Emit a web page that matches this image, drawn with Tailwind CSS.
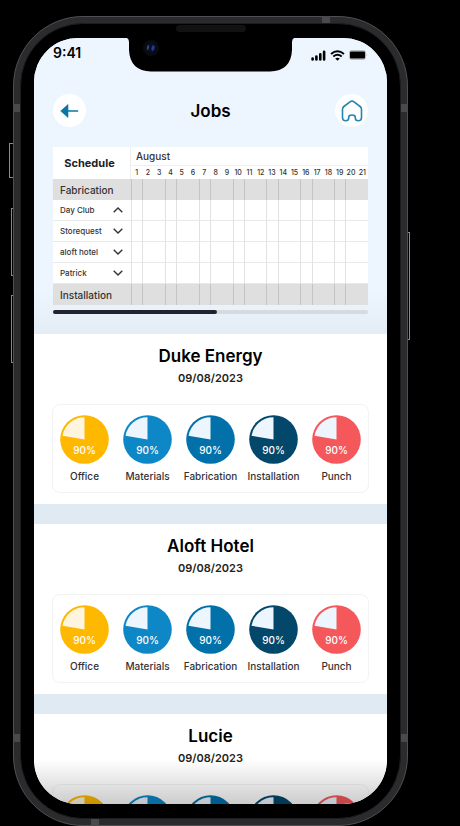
<!DOCTYPE html>
<html lang="en">
<head>
<meta charset="utf-8">
<meta name="viewport" content="width=device-width, initial-scale=1">
<title>Jobs</title>
<script src="https://cdn.jsdelivr.net/npm/@tailwindcss/browser@4"></script>
</head>
<body class="bg-black font-['Inter','Liberation_Sans',sans-serif] text-black">
<div class="h-screen overflow-hidden pt-4 pl-[13px] pr-[52px]">
  <div class="relative h-full rounded-[70px] border border-[#505052] bg-[#2b2b2d] p-[6px]">
    <!-- hardware buttons -->
    <span class="absolute -left-[5px] top-[126px] h-[35px] w-1 border border-r-0 border-[#8a8a8a]"></span>
    <span class="absolute -left-[3px] top-[191px] h-[68px] w-[2px] border border-r-0 border-[#8a8a8a]"></span>
    <span class="absolute -left-[3px] top-[278px] h-[68px] w-[2px] border border-r-0 border-[#8a8a8a]"></span>
    <span class="absolute -right-[3px] top-[215px] h-[108px] w-[2px] border border-l-0 border-[#8a8a8a]"></span>
    <!-- antenna bands -->
    <span class="absolute -left-px top-[87px] h-2 w-[7px] bg-[#4a4a4c]"></span>
    <span class="absolute -right-px top-[87px] h-2 w-[7px] bg-[#4a4a4c]"></span>
    <span class="absolute -left-px bottom-[83px] h-2 w-[7px] bg-[#4a4a4c]"></span>
    <span class="absolute -right-px bottom-[83px] h-2 w-[7px] bg-[#4a4a4c]"></span>
    <span class="absolute -top-px right-[77px] h-[7px] w-2 bg-[#4a4a4c]"></span>
    <span class="absolute -bottom-px left-[77px] h-[7px] w-2 bg-[#4a4a4c]"></span>

    <div class="relative h-full rounded-[63px] border border-[#1c1c1d] bg-black px-[13px] pt-[14px] pb-[14px]">
      <span class="absolute left-1/2 top-px h-[7px] w-[70px] -translate-x-1/2 rounded-full bg-[#121213]"></span>

      <main class="relative h-full overflow-hidden rounded-[44px] bg-[#e0eaf3]">
        <!-- notch -->
        <div class="absolute inset-x-0 top-0 z-10 flex justify-center">
          <svg class="block" width="167" height="34" viewBox="0 0 167 34" aria-hidden="true">
            <path d="M0 0H167Q165 1 165 4V12Q164 33 143 33.500H24Q3 33 2 12V4Q2 1 0 0Z" fill="#000"/>
            <circle cx="24" cy="10" r="8" fill="#0a0b10"/>
            <circle cx="24" cy="10" r="5" fill="#0b0d22"/>
            <ellipse cx="21" cy="9.500" rx="1" ry="2.500" fill="#24565a" transform="rotate(15 21 9.500)"/>
            <ellipse cx="26" cy="10" rx="1.500" ry="2.800" fill="#2338a0" transform="rotate(15 26 10)"/>
          </svg>
        </div>

        <div class="h-full overflow-y-auto [scrollbar-width:none]">
          <header class="bg-linear-to-b from-[#edf5fe] from-85% to-[#e4edf6] px-[19px] pb-5">
            <div class="flex h-[30px] items-center justify-between">
              <span class="text-sm font-semibold">9:41</span>
              <div class="flex items-center gap-1 pt-1">
                <svg width="15" height="11" viewBox="0 0 15 11" aria-label="Signal"><path d="M1.600 9.500V8.500M5.400 9.500V6.500M9.300 9.500V4.300M13.100 9.500V1.700" stroke="#000" stroke-width="2.600" stroke-linecap="round" fill="none"/></svg>
                <svg width="15" height="11" viewBox="0 0 15 11" aria-label="Wi-Fi"><path d="M1 4Q7.500-1.400 14 4M3.300 6.500Q7.500 3 11.700 6.500" stroke="#000" stroke-width="1.900" fill="none"/><path d="M5.200 8.500Q7.500 6.800 9.800 8.500L7.500 10.800Z"/></svg>
                <svg width="19" height="10" viewBox="0 0 19 10" aria-label="Battery"><rect x=".5" y=".5" width="16" height="9" rx="2" fill="#d5dadf" stroke="#b9bec4"/><rect x="1" y="1.500" width="15" height="7" rx="1"/><path d="M17.500 3.500q1.500 1.500 0 3z" fill="#b4b7bb"/></svg>
              </div>
            </div>

            <div class="mt-[26px] flex items-center justify-between">
              <button type="button" aria-label="Back" class="grid size-[33px] place-items-center rounded-full bg-white">
                <svg width="19" height="14" viewBox="0 0 19 14"><path d="M8 .500V13.500L.7 7Z" fill="#0a76a8" stroke="#0a76a8" stroke-width=".6" stroke-linejoin="round"/><path d="M7 7H17.500" stroke="#0a76a8" stroke-width="1.700" stroke-linecap="round"/></svg>
              </button>
              <h1 class="text-[17px] leading-7 font-semibold">Jobs</h1>
              <button type="button" aria-label="Home" class="grid size-[33px] place-items-center rounded-full bg-white">
                <svg width="22" height="22" viewBox="0 0 22 22" fill="none" stroke="#2585b2" stroke-width="1.600" stroke-linejoin="round"><path d="M1.500 9.300Q1.500 7.600 2.900 6.500L9.300 1.700Q11 .5 12.700 1.700L19.100 6.500Q20.500 7.600 20.500 9.300V17.500Q20.500 20.800 17.300 20.800Q14.300 20.800 14.300 18V17.500Q14.300 15 11 15Q7.700 15 7.700 17.500V18Q7.700 20.800 4.700 20.800Q1.500 20.800 1.500 17.500Z"/></svg>
              </button>
            </div>

            <table class="mt-5 w-full table-fixed border-separate border-spacing-0 bg-white text-left text-[#333]" id="schedule">
              <colgroup><col class="w-[78px]"><col span="21"></colgroup>
              <thead>
                <tr class="h-[19px]">
                  <th rowspan="2" scope="col" class="border-r border-[#eee] p-0 pr-1 text-center text-[11px] font-bold text-[#222]">Schedule</th>
                  <th colspan="21" scope="colgroup" class="border-b border-[#f0f0f0] p-0 pl-[5px] text-[10px] leading-3 font-medium">August</th>
                </tr>
                <tr class="h-[13px]" id="days"></tr>
              </thead>
              <tbody id="rows"></tbody>
            </table>
            <div class="mt-[5px] h-1 rounded-full bg-[#d9dadd]"><div class="h-1 w-[52%] rounded-full bg-[#22232f]"></div></div>
          </header>

          <div id="jobs" class="flex flex-col gap-5"></div>
        </div>

        <div class="pointer-events-none absolute inset-x-0 bottom-0 h-11 bg-linear-to-b from-black/0 to-black/20"></div>
      </main>
    </div>
  </div>
</div>

<template id="chevron-up"><svg width="10" height="6" viewBox="0 0 10 6" fill="none" stroke="#333" stroke-width="1.400"><path d="M.7 5.300L5 1L9.300 5.300"/></svg></template>
<template id="chevron-down"><svg width="10" height="6" viewBox="0 0 10 6" fill="none" stroke="#333" stroke-width="1.400"><path d="M.7.700L5 5L9.300.700"/></svg></template>

<script>
const days = Array.from({ length: 21 }, (_, i) => i);
document.getElementById('days').innerHTML = days.map(i =>
  `<th scope="col" class="p-0 text-center text-[7px] leading-3 font-medium">${i + 1}</th>`).join('');

const chevron = id => document.getElementById(id).innerHTML;
const rows = [
  ['Fabrication'], ['Day Club', 'chevron-up'], ['Storequest', 'chevron-down'],
  ['aloft hotel', 'chevron-down'], ['Patrick', 'chevron-down'], ['Installation']
];
document.getElementById('rows').innerHTML = rows.map(([name, icon]) => {
  const under = icon ? 'border-b border-b-[#e9e9e9]' : '';
  const cells = days.map(i => {
    const line = i % 3 === 2 ? '' : icon ? 'border-l border-l-[#e2e2e2]' : 'border-l border-l-[#c4c4c4]';
    return `<td class="p-0 ${under} ${line}"></td>`;
  }).join('');
  const head = icon
    ? `<th scope="row" class="p-0 ${under}"><button type="button" class="flex w-full items-center justify-between pr-2 pl-[7px] text-[8px] leading-3 font-medium">${name}${chevron(icon)}</button></th>`
    : `<th scope="row" class="p-0 pl-[7px] text-[10px] leading-3 font-medium">${name}</th>`;
  return `<tr class="${icon ? 'h-[21px]' : 'h-[21px] bg-[#dfdfdf]'}">${head}${cells}</tr>`;
}).join('');

const stages = [
  ['Office', '#ffb800', '#fff5df'], ['Materials', '#0d87c6', '#edf5fe'], ['Fabrication', '#0271aa', '#edf5fe'],
  ['Installation', '#03476a', '#edf5fe'], ['Punch', '#f4585b', '#edf5fe']
];
const pies = stages.map(([label, color, rest]) => `
  <li class="flex flex-col items-center">
    <div class="relative">
      <svg class="block" width="49" height="49" viewBox="0 0 49 49" aria-hidden="true"><circle cx="24.500" cy="24.500" r="24.300" fill="${color}"/><path d="M24.500 24.500V2.200A22.300 22.300 0 0 0 2.500 20.800Z" fill="${rest}"/></svg>
      <span class="absolute inset-x-0 bottom-2 text-center text-[10px] leading-3 font-medium text-white">90%</span>
    </div>
    <span class="mt-[6px] text-[10px] leading-3 font-medium text-[#333]">${label}</span>
  </li>`).join('');
document.getElementById('jobs').innerHTML = ['Duke Energy', 'Aloft Hotel', 'Lucie'].map(name => `
  <section class="shrink-0 bg-white px-[18px] pt-3 pb-[11px] text-center">
    <h2 class="text-[17px] leading-5 font-semibold">${name}</h2>
    <p class="mt-1 text-[11px] leading-4 font-semibold text-[#222]">09/08/2023</p>
    <ul class="mt-[18px] grid grid-cols-5 rounded-lg border border-[#f3f3f3] py-[10px]">${pies}</ul>
  </section>`).join('');
</script>
</body>
</html>
